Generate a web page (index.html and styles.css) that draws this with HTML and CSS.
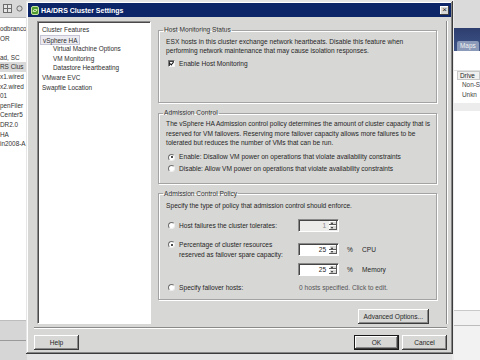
FILE: index.html
```html
<!DOCTYPE html>
<html lang="en">
<head>
    <meta charset="UTF-8">
    <title>HA/DRS Cluster Settings</title>
    <link rel="stylesheet" href="styles.css">
</head>
<body>
    <div class="desktop">
        <aside class="tree-pane">
            <div class="toolbar">
                <svg width="9" height="9" viewBox="0 0 9 9"><rect x="0.5" y="0.5" width="8" height="8" fill="#e6e6e6" stroke="#6d6d6d"/><path d="M0.5 4.5h8M4.5 0.5v8" stroke="#6d6d6d"/></svg>
                <svg width="7" height="9" viewBox="0 0 7 9"><circle cx="3.5" cy="4.5" r="2.6" fill="none" stroke="#707070"/></svg>
            </div>
            <ul class="tree">
                <li>odbranco</li>
                <li>OR</li>
                <li>&nbsp;</li>
                <li>ad, SC</li>
                <li class="selected">RS Clus</li>
                <li>x1.wired</li>
                <li>x2.wired</li>
                <li>01</li>
                <li>penFiler</li>
                <li>Center5</li>
                <li>DR2.0</li>
                <li>HA</li>
                <li>in2008-A</li>
            </ul>
            <div class="tree-foot"></div>
        </aside>
        <main class="client-center"></main>
        <aside class="side-pane">
            <div class="side-top"></div>
            <div class="side-tabs"><span class="tab">Maps</span></div>
            <div class="side-gap"></div>
            <div class="side-head">Drive</div>
            <div class="side-row">Non-S</div>
            <div class="side-row">Unkn</div>
            <div class="side-band"></div>
            <div class="side-fill"></div>
            <div class="side-foot"></div>
        </aside>
    </div>

    <div class="dialog">
        <div class="titlebar">
            <svg class="app-icon" width="8" height="9" viewBox="0 0 8 9"><rect x="0.5" y="0.5" width="7" height="8" rx="1.5" fill="#4f9a2e" stroke="#c8e6a0"/><path d="M2 5.5c0-2 2.5-2.6 4-1.4M6 3.5c0 2-2.5 2.6-4 1.4" stroke="#e9f7d2" fill="none"/></svg>
            <span class="title">HA/DRS Cluster Settings</span>
            <span class="close-btn">×</span>
        </div>

        <div class="dialog-body">
            <div class="panes">
                <ul class="nav-list">
                    <li>Cluster Features</li>
                    <li class="active"><span>vSphere HA</span></li>
                    <li class="sub">Virtual Machine Options</li>
                    <li class="sub">VM Monitoring</li>
                    <li class="sub">Datastore Heartbeating</li>
                    <li>VMware EVC</li>
                    <li>Swapfile Location</li>
                </ul>

                <div class="settings">
                    <fieldset class="group host-group">
                        <legend>Host Monitoring Status</legend>
                        <p class="note">ESX hosts in this cluster exchange network heartbeats. Disable this feature when<br>performing network maintenance that may cause isolation responses.</p>
                        <div class="option check-row"><span class="checkbox checked"></span>Enable Host Monitoring</div>
                    </fieldset>

                    <fieldset class="group admission-group">
                        <legend>Admission Control</legend>
                        <p class="note">The vSphere HA Admission control policy determines the amount of cluster capacity that is<br>reserved for VM failovers. Reserving more failover capacity allows more failures to be<br>tolerated but reduces the number of VMs that can be run.</p>
                        <div class="option radio-first"><span class="radio on"></span>Enable: Disallow VM power on operations that violate availability constraints</div>
                        <div class="option radio-next"><span class="radio"></span>Disable: Allow VM power on operations that violate availability constraints</div>
                    </fieldset>

                    <fieldset class="group policy-group">
                        <legend>Admission Control Policy</legend>
                        <p class="note">Specify the type of policy that admission control should enforce.</p>

                        <div class="policy-row row-hosts">
                            <div class="option"><span class="radio"></span>Host failures the cluster tolerates:</div>
                            <div class="spin disabled"><span class="spin-value">1</span><span class="spin-btns"><i class="up"></i><i class="down"></i></span></div>
                        </div>

                        <div class="policy-row row-cpu">
                            <div class="option top"><span class="radio on"></span><span>Percentage of cluster resources<br>reserved as failover spare capacity:</span></div>
                            <div class="spin"><span class="spin-value">25</span><span class="spin-btns"><i class="up"></i><i class="down"></i></span></div>
                            <span class="unit">%</span>
                            <span class="res">CPU</span>
                        </div>

                        <div class="policy-row row-mem">
                            <div></div>
                            <div class="spin"><span class="spin-value">25</span><span class="spin-btns"><i class="up"></i><i class="down"></i></span></div>
                            <span class="unit">%</span>
                            <span class="res">Memory</span>
                        </div>

                        <div class="policy-row row-failover">
                            <div class="option"><span class="radio"></span>Specify failover hosts:</div>
                            <span class="hint">0 hosts specified. Click to edit.</span>
                        </div>
                    </fieldset>

                    <div class="advanced">
                        <button class="btn">Advanced Options...</button>
                    </div>
                </div>
            </div>

            <div class="footer">
                <button class="btn">Help</button>
                <div class="footer-right">
                    <button class="btn default">OK</button>
                    <button class="btn">Cancel</button>
                </div>
            </div>
        </div>
    </div>
</body>
</html>
```

FILE: styles.css
```css
* {
    margin: 0;
    padding: 0;
    box-sizing: border-box;
}

body {
    width: 480px;
    height: 360px;
    overflow: hidden;
    position: relative;
    background: #fff;
    color: #262626;
    font-family: 'Liberation Sans', Tahoma, sans-serif;
    font-size: 6.6px;
}

/* client window behind the dialog */
.desktop {
    display: flex;
    height: 360px;
}

.tree-pane {
    width: 27px;
    display: flex;
    flex-direction: column;
    background: #fff;
    font-size: 6.4px;
}

.toolbar {
    height: 18px;
    background: #d8d8d8;
    border-bottom: 1px solid #b8b8b8;
    display: flex;
    align-items: center;
    gap: 4px;
    padding-left: 3px;
}

.tree {
    list-style: none;
    padding-top: 6px;
    flex: 1;
}

.tree li {
    height: 9.6px;
    line-height: 9.6px;
    white-space: nowrap;
    color: #333;
}

.tree .selected {
    background: #d9d9d9;
}

.tree-foot {
    height: 40px;
    background: #d6d6d6;
    border-top: 1px solid #bdbdbd;
    box-shadow: inset 0 19px 0 #d6d6d6, inset 0 20px 0 #9a9a9a;
}

.client-center {
    flex: 1;
    background: #e4e4e4;
}

.side-pane {
    width: 28px;
    display: flex;
    flex-direction: column;
    background: #fff;
    border-left: 2px solid #ececec;
    white-space: nowrap;
    font-size: 6.4px;
}

.side-top {
    height: 28px;
    background: #dadada;
}

.side-tabs {
    height: 23px;
    background: linear-gradient(#2d3e6e, #40558a);
    display: flex;
    align-items: flex-end;
    padding-left: 3px;
}

.tab {
    background: #8a9ab8;
    color: #f2f2f2;
    padding: 1px 3px 1px;
    line-height: 8px;
    border-radius: 2px 2px 0 0;
}

.side-gap {
    height: 20px;
    border-bottom: 1px solid #e2e2e2;
}

.side-head {
    height: 9px;
    line-height: 8px;
    margin-left: 3px;
    padding-left: 2px;
    border: 1px solid #c8c8c8;
    background: #f0f0f0;
}

.side-row {
    line-height: 10px;
    padding-left: 8px;
    color: #444;
}

.side-band {
    height: 8px;
    margin-top: 3px;
    background: #ececec;
}

.side-fill {
    flex: 1;
}

.side-foot {
    height: 50px;
    background: #f2f2f2;
    border-top: 1px solid #c9c9c9;
    box-shadow: inset 0 14px 0 #f2f2f2, inset 0 15px 0 #bcbcbc;
}

/* dialog window */
.dialog {
    position: absolute;
    left: 26px;
    top: 1px;
    width: 427px;
    height: 353px;
    padding: 2px;
    background: #d7d7d5;
    box-shadow: inset -1px -1px #3c3c3c, inset 1px 1px #e6e6e6, inset -2px -2px #868686, inset 2px 2px #fff;
    display: flex;
    flex-direction: column;
}

.titlebar {
    height: 14px;
    background: #0c2468;
    display: flex;
    align-items: center;
    padding: 0 2px 0 3px;
}

.app-icon {
    flex: none;
}

.title {
    margin-left: 2px;
    color: #fff;
    font-weight: bold;
    font-size: 7px;
    flex: 1;
}

.close-btn {
    width: 9px;
    height: 9px;
    background: #d7d7d5;
    box-shadow: inset -1px -1px #404040, inset 1px 1px #fff;
    color: #222;
    font-size: 8px;
    line-height: 8px;
    text-align: center;
}

.dialog-body {
    flex: 1;
    display: flex;
    flex-direction: column;
    padding: 4px 4px 0 9px;
}

.panes {
    height: 303px;
    display: flex;
    gap: 2px;
}

.nav-list {
    width: 116px;
    list-style: none;
    background: #fff;
    border: 1px solid;
    border-color: #8a8a8a #fff #fff #8a8a8a;
    box-shadow: inset 1px 1px #4a4a4a;
    padding: 3px 0 0 1px;
    font-size: 6.4px;
}

.nav-list li {
    height: 9.6px;
    line-height: 9.6px;
    padding-left: 3px;
    white-space: nowrap;
    color: #2e2e2e;
}

.nav-list .sub {
    padding-left: 14px;
}

.nav-list .active span {
    display: inline-block;
    margin-left: -2px;
    padding: 0 2px;
    height: 10px;
    line-height: 9px;
    background: #ecebf2;
    border: 1px solid #c4c4d4;
}

.settings {
    flex: 1;
    padding: 5px 9px 0 5px;
    border-right: 1px solid #8a8a8a;
    box-shadow: 1px 0 #fff;
}

.group {
    border: 1px solid #a3a3a3;
    box-shadow: inset 1px 1px #fff, 1px 1px #fff;
    padding: 0 6px 0 7px;
}

.group legend {
    margin-left: -3px;
    padding: 0 1px;
    line-height: 8px;
    color: #333;
}

.note {
    line-height: 9.4px;
    white-space: nowrap;
}

.option {
    display: flex;
    align-items: center;
    line-height: 9.4px;
    white-space: nowrap;
}

.option.top {
    align-items: flex-start;
}

.option.top .radio {
    margin-top: 1px;
}

.checkbox,
.radio {
    flex: none;
    width: 7px;
    height: 7px;
    margin: 0 4px 0 2px;
    background: #fff;
    position: relative;
}

.checkbox {
    border: 1px solid;
    border-color: #7a7a7a #f4f4f4 #f4f4f4 #7a7a7a;
    box-shadow: inset 1px 1px #3e3e3e;
}

.checkbox.checked::after {
    content: '';
    position: absolute;
    left: 1px;
    top: 0;
    width: 2px;
    height: 3px;
    border: solid #111;
    border-width: 0 1px 1px 0;
    transform: rotate(40deg);
}

.radio {
    border-radius: 50%;
    border: 1px solid;
    border-color: #6e6e6e #eee #eee #6e6e6e;
}

.radio.on::after {
    content: '';
    position: absolute;
    left: 1.5px;
    top: 1.5px;
    width: 2px;
    height: 2px;
    border-radius: 50%;
    background: #111;
}

.host-group .note {
    padding-top: 2.5px;
}

.check-row {
    margin-top: 3.5px;
    padding-bottom: 33.5px;
}

.admission-group {
    margin-top: 6.5px;
}

.admission-group .note {
    padding-top: 2px;
}

.radio-first {
    margin-top: 5px;
}

.radio-next {
    margin-top: 1.8px;
    padding-bottom: 9.5px;
}

.policy-group {
    margin-top: 6px;
    padding-bottom: 6.5px;
}

.policy-group .note {
    padding-top: 3px;
}

.policy-row {
    display: grid;
    grid-template-columns: 132px 41px 23px auto;
    align-items: center;
}

.row-hosts {
    margin-top: 9px;
}

.row-cpu {
    margin-top: 8.5px;
}

.row-mem {
    margin-top: 3.5px;
}

.row-failover {
    margin-top: 7.5px;
}

.spin {
    height: 13px;
    display: flex;
    background: #fff;
    border: 1px solid;
    border-color: #8a8a8a #fff #fff #8a8a8a;
    box-shadow: inset 1px 1px #454545;
}

.spin.disabled {
    background: #ececea;
}

.spin-value {
    flex: 1;
    text-align: right;
    line-height: 11px;
    padding-right: 3px;
}

.spin.disabled .spin-value {
    color: #8a8a8a;
}

.spin-btns {
    width: 8px;
    display: flex;
    flex-direction: column;
    margin: 1px 1px 1px 0;
}

.spin-btns i {
    flex: 1;
    background: #d7d7d5;
    box-shadow: inset -1px -1px #5a5a5a, inset 1px 1px #fff;
    position: relative;
}

.spin-btns i::after {
    content: '';
    position: absolute;
    left: 2px;
    top: 1.5px;
    border-left: 1.5px solid transparent;
    border-right: 1.5px solid transparent;
}

.spin-btns .up::after {
    border-bottom: 2px solid #222;
}

.spin-btns .down::after {
    border-top: 2px solid #222;
}

.unit {
    padding-left: 8px;
}

.hint {
    grid-column: 2 / 5;
    padding-left: 1px;
    color: #555;
    line-height: 9.4px;
}

.advanced {
    display: flex;
    justify-content: flex-end;
    margin-top: 9px;
    padding-right: 8px;
}

.btn {
    height: 15px;
    min-width: 45px;
    padding: 0 6px;
    font-family: inherit;
    font-size: 6.6px;
    color: #262626;
    background: #d7d7d5;
    border: none;
    box-shadow: inset -1px -1px #3c3c3c, inset 1px 1px #fff, inset -2px -2px #8a8a8a;
}

.btn.default {
    box-shadow: inset 0 0 0 1px #1a1a1a, inset -2px -2px #3c3c3c, inset 2px 2px #fff, inset -3px -3px #8a8a8a;
}

.footer {
    margin-top: 3px;
    border-top: 1px solid #8a8a8a;
    box-shadow: inset 0 1px #fff;
    display: flex;
    justify-content: space-between;
    padding: 7px 0 0 0;
    margin-left: -3px;
}

.footer-right {
    display: flex;
    gap: 3px;
}
```
